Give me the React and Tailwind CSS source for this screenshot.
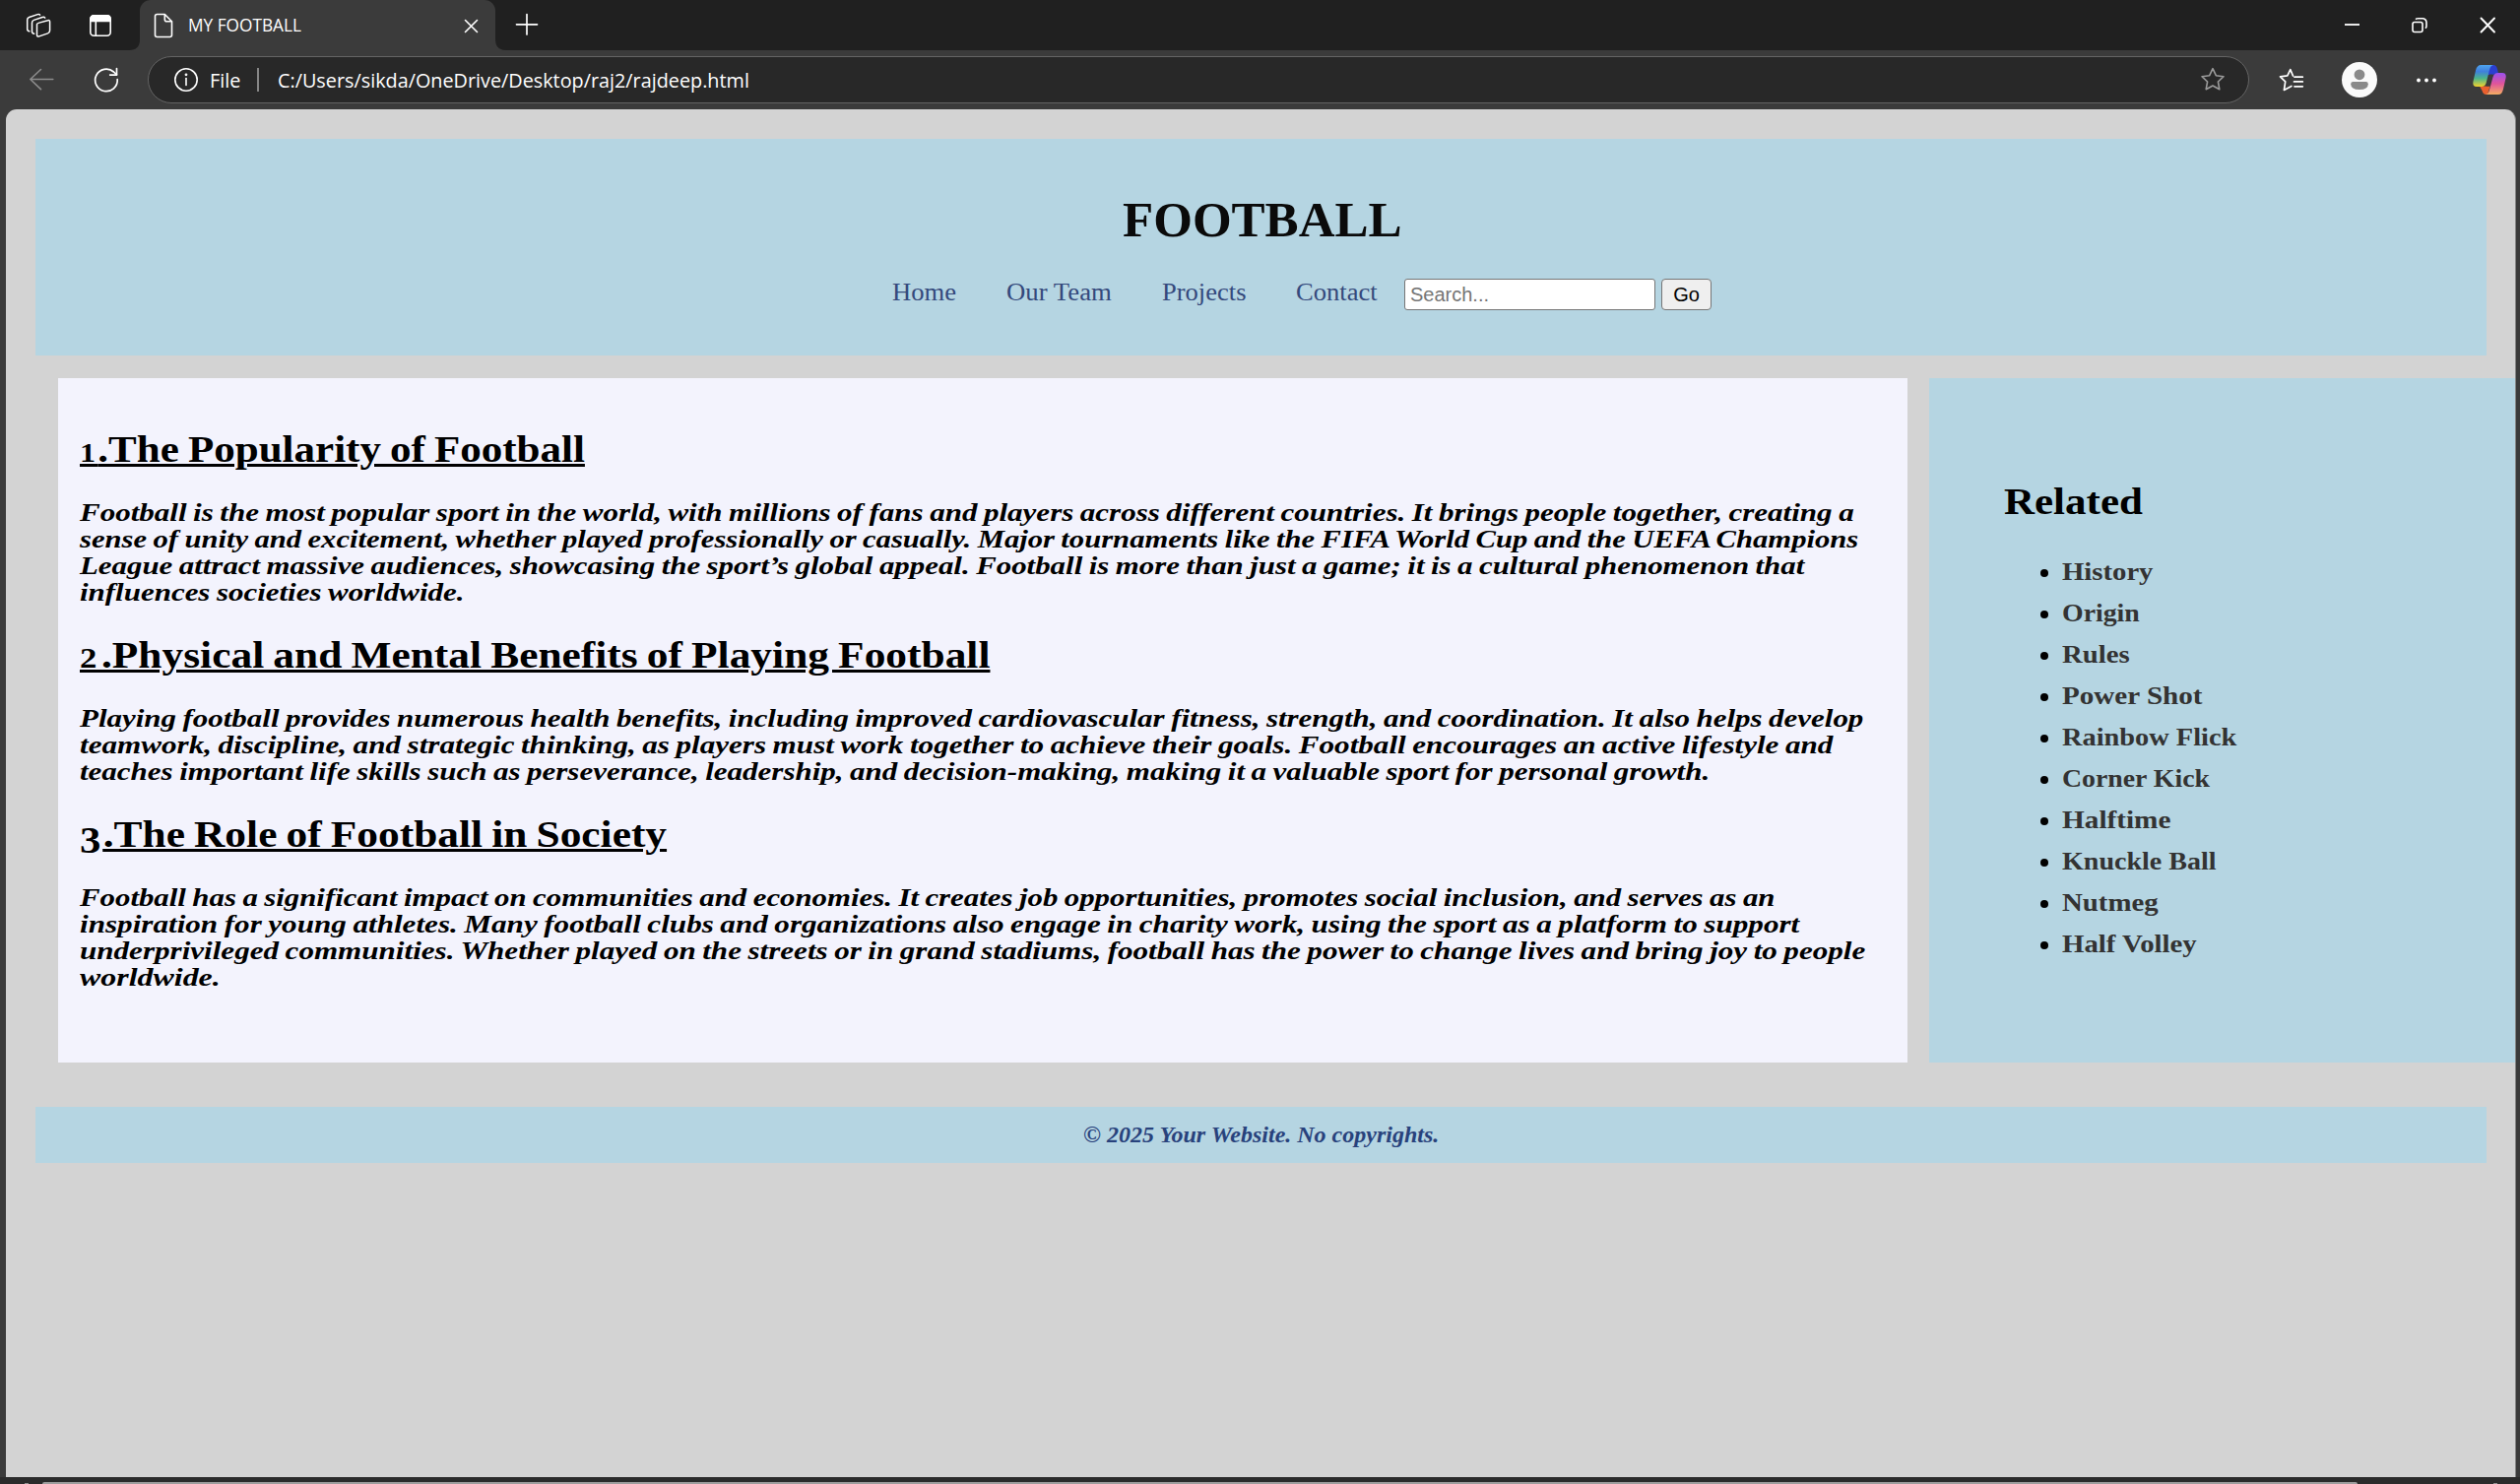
import { useLayoutEffect, useRef } from "react";

/* Text on one line, stretched horizontally to fill the width of its box. */
function Fit({ className = "", textClass = "", children }) {
  const box = useRef(null);
  const ink = useRef(null);
  useLayoutEffect(() => {
    const ratio = box.current.clientWidth / ink.current.offsetWidth;
    ink.current.style.transform = `scaleX(${ratio})`;
  }, []);
  return (
    <span ref={box} className={`block shrink-0 whitespace-nowrap ${className}`}>
      <span ref={ink} className={`inline-block origin-left align-top ${textClass}`}>
        {children}
      </span>
    </span>
  );
}

const line = { fill: "none", stroke: "currentColor", strokeLinecap: "round", strokeLinejoin: "round" };

function TabStrip() {
  return (
    <div className="flex h-[51px] items-start bg-[#202020] text-white">
      <svg className="mt-3 ml-[25px] h-7 w-7" viewBox="0 0 28 28" {...line} strokeWidth="1.5">
        <path d="M12.500 12.600v10.600q0 2.500 2.300 1.700l8.800-3q2-.8 2-2.800v-8.800q0-2.300-2-1.600l-8.800 2.400q-2.300.7-2.300 1.500z" />
        <path d="M9.700 22.300q-2.200-.2-2.200-2.200v-9.200q0-1.900 1.900-2.500l8.600-2.900q1.900-.6 2.700.6" />
        <path d="M4.800 19.800q-2.100-.3-2.100-2.300V8q0-1.900 1.900-2.500l8.600-2.900q1.700-.5 2.400.5" />
      </svg>
      <svg className="mt-3 ml-[35px] h-7 w-7" viewBox="0 0 28 28" {...line} strokeWidth="1.600">
        <rect x="3.800" y="3.800" width="20.400" height="20.400" rx="3.500" />
        <path d="M4 9.500V7a3.200 3.200 0 0 1 3.200-3.200h13.600A3.200 3.200 0 0 1 24 7v2.500z" fill="currentColor" />
        <path d="M9.300 10v14" />
      </svg>
      <div className="ml-[15px] flex h-[51px] items-end">
        <svg className="h-[11px] w-[11px]" viewBox="0 0 11 11">
          <path d="M11 0v11H0Q11 11 11 0z" fill="#3b3b3b" />
        </svg>
        <div className="flex h-[51px] w-[361px] items-start rounded-t-[11px] bg-[#3b3b3b]">
          <svg className="mt-[13px] ml-[14px] h-[26px] w-5" viewBox="0 0 20 26" {...line} strokeWidth="1.600">
            <path d="M3.500 1.500h7.800l7.200 7.200v13.800q0 2-2 2h-13q-2 0-2-2v-19q0-2 2-2z" />
            <path d="M11.300 1.800v5q0 2 2 2h5" />
          </svg>
          <Fit className="mt-[12px] ml-[15px] w-[115px] font-['Open_Sans','Noto_Sans',sans-serif] text-[18px] leading-[26px]">MY FOOTBALL</Fit>
          <svg className="mt-[19px] ml-[165px] h-[15px] w-[15px]" viewBox="0 0 15 15" {...line} strokeWidth="1.600">
            <path d="M1.500 1.500l12 12M13.500 1.500l-12 12" />
          </svg>
        </div>
        <svg className="h-[11px] w-[11px]" viewBox="0 0 11 11">
          <path d="M0 0v11h11Q0 11 0 0z" fill="#3b3b3b" />
        </svg>
      </div>
      <svg className="mt-[13px] ml-[9px] h-6 w-6" viewBox="0 0 24 24" {...line} strokeWidth="1.700">
        <path d="M12 1.500v20.500M1.500 11.800h21" />
      </svg>
      <div className="mt-[16px] mr-[23px] ml-auto flex gap-[50px]">
        <svg className="h-[19px] w-[19px]" viewBox="0 0 19 19" {...line} strokeWidth="1.800" strokeLinecap="butt">
          <path d="M2 9h15" />
        </svg>
        <svg className="h-[19px] w-[19px]" viewBox="0 0 19 19" {...line} strokeWidth="1.600">
          <rect x="2" y="6.500" width="10" height="10" rx="2" />
          <path d="M5.500 3.200Q6.200 2.700 7.500 2.700H12a4 4 0 0 1 4 4v3.500q0 1.300-.6 2" />
        </svg>
        <svg className="h-[19px] w-[19px]" viewBox="0 0 19 19" {...line} strokeWidth="1.900">
          <path d="M2.500 2.500l13.500 14M16 2.500L2.500 16.500" />
        </svg>
      </div>
    </div>
  );
}

const STAR = "M14 2.700l3.300 7 7.700 1-5.600 5.300 1.400 7.700-6.800-3.700-6.800 3.700 1.400-7.700L3 10.700l7.700-1z";

function Copilot() {
  return (
    <svg className="mr-[13px] ml-auto h-[32px] w-[36px]" viewBox="0 0 36 32">
      <defs>
        <linearGradient id="cpLeft" x1="0" y1="0" x2="0" y2="1">
          <stop offset="0" stopColor="#4fa5f0" />
          <stop offset=".3" stopColor="#3f7fdc" />
          <stop offset=".62" stopColor="#4cb58a" />
          <stop offset="1" stopColor="#f3d22c" />
        </linearGradient>
        <linearGradient id="cpRight" x1="0" y1="0" x2="0" y2="1">
          <stop offset="0" stopColor="#9a50f0" />
          <stop offset=".5" stopColor="#e0559a" />
          <stop offset="1" stopColor="#f4ad62" />
        </linearGradient>
      </defs>
      <path d="M17 1h5q3 0 4 4l1 4.500q-4 0-5.500 1.500H16z" fill="#2b3fd0" />
      <path d="M8 22.500h10.500L16 31h-1.500q-3 0-4-4z" fill="#e9602f" />
      <path d="M9.500 1H22q-3 .5-4 5l-3.300 13Q13.700 23 9.700 23H5q-4.500 0-3.600-5L4 6.500Q5.200 1 9.500 1z" fill="url(#cpLeft)" />
      <path d="M27 31H14q3-.5 4-5l3.300-12Q22.500 9 26.500 9H31q4.500 0 3.600 5L32 25.500Q30.800 31 27 31z" fill="url(#cpRight)" />
      <path d="M18 10.500h3.500L18 22.500h-3.300z" fill="#3b3b3b" />
    </svg>
  );
}

function Toolbar() {
  return (
    <div className="flex h-[60px] items-center bg-[#3b3b3b] text-white">
      <svg className="ml-[28px] h-7 w-7 text-[#8c8c8c]" viewBox="0 0 28 28" {...line} strokeWidth="1.600">
        <path d="M13.500 3.500L2.800 13.500l10.700 10.200M2.800 13.500h23" />
      </svg>
      <svg className="ml-[38px] h-7 w-7" viewBox="0 0 28 28" {...line} strokeWidth="1.700">
        <path d="M25.200 13.500A11.300 11.300 0 1 1 21.500 6l3 2.900" />
        <path d="M24.500 2.600v6.500h-6.800" />
      </svg>
      <div className="ml-[28px] flex h-[48px] w-[2134px] items-center rounded-full border-[1.500px] border-[#646464] bg-[#282828]">
        <svg className="ml-[24px] h-7 w-7" viewBox="0 0 28 28" {...line} strokeWidth="1.600">
          <circle cx="14" cy="14" r="11.200" />
          <path d="M14 12.500v7" />
          <circle cx="14" cy="8.800" r=".6" fill="currentColor" />
        </svg>
        <Fit className="ml-[10px] w-[31px] font-['Open_Sans','Noto_Sans',sans-serif] text-[20.500px] leading-7">File</Fit>
        <div className="ml-[17px] h-6 w-[1.500px] bg-[#858585]" />
        <Fit className="ml-[19px] w-[479px] font-['Open_Sans','Noto_Sans',sans-serif] text-[20.500px] leading-7">
          C:/Users/sikda/OneDrive/Desktop/raj2/rajdeep.html
        </Fit>
        <svg className="mr-[22px] ml-auto h-7 w-7 text-[#9a9a9a]" viewBox="0 0 28 28" {...line} strokeWidth="1.600">
          <path d={STAR} />
        </svg>
      </div>
      <svg className="ml-[28px] h-7 w-7" viewBox="0 0 28 28" {...line} strokeWidth="1.700">
        <path d="M16.500 10L13.800 3.600l-3 6.200-7.300 1 5.200 5.100-1.300 8.600 7.500-4" />
        <path d="M18 11.200h8.300M17.500 15.900h8.800M18 20.800h8.300" />
      </svg>
      <svg className="ml-[38px] h-9 w-9" viewBox="0 0 36 36">
        <circle cx="18" cy="18" r="18" fill="#fafafa" />
        <circle cx="18" cy="12.800" r="5.400" fill="#8a8a8a" />
        <path d="M11.500 20h13q2.300 0 2.300 2.200 0 5.800-8.800 5.800t-8.800-5.800q0-2.200 2.300-2.200z" fill="#8a8a8a" />
      </svg>
      <svg className="ml-[38px] h-6 w-6" viewBox="0 0 24 24" fill="currentColor">
        <circle cx="4" cy="12.500" r="1.900" />
        <circle cx="12" cy="12.500" r="1.900" />
        <circle cx="20" cy="12.500" r="1.900" />
      </svg>
      <Copilot />
    </div>
  );
}

function Masthead() {
  return (
    <header className="mr-[29px] ml-[30px] flex h-[220px] flex-col bg-[#b5d5e2]">
      <h1 className="mt-[54px] ml-[1104px] font-bold text-[#0a0a0a]">
        <Fit className="w-[284px] text-[50.500px] leading-[56px]">FOOTBALL</Fit>
      </h1>
      <nav className="mt-[28px] ml-[870px] flex items-center text-[25px] leading-[32px] text-[#34497c]">
        <Fit className="w-[65px]">Home</Fit>
        <Fit className="ml-[51px] w-[107px]">Our Team</Fit>
        <Fit className="ml-[51px] w-[86px]">Projects</Fit>
        <Fit className="ml-[50px] w-[83px]">Contact</Fit>
        <div className="mt-[4px] ml-[27px] flex gap-[6px] font-['Liberation_Sans',Arial,sans-serif] text-[20px]">
          <input
            placeholder="Search..."
            className="h-[32px] w-[255px] rounded-[3px] border-[1.500px] border-[#767676] bg-white px-[5px] leading-[28px] placeholder:text-[#757575]"
          />
          <button className="h-[32px] w-[51px] rounded-[4px] border-[1.500px] border-[#767676] bg-[#efefef] leading-[28px] text-black">Go</button>
        </div>
      </nav>
    </header>
  );
}

const SECTIONS = [
  {
    digit: "1",
    digitClass: "text-[28px] tracking-[2px]",
    title: ".The Popularity of Football",
    width: "w-[513px]",
    lines: [
      ["w-[1802px]", "Football is the most popular sport in the world, with millions of fans and players across different countries. It brings people together, creating a"],
      ["w-[1806px]", "sense of unity and excitement, whether played professionally or casually. Major tournaments like the FIFA World Cup and the UEFA Champions"],
      ["w-[1751px]", "League attract massive audiences, showcasing the sport’s global appeal. Football is more than just a game; it is a cultural phenomenon that"],
      ["w-[390px]", "influences societies worldwide."],
    ],
  },
  {
    digit: "2",
    digitClass: "text-[30px] tracking-[4px]",
    title: ".Physical and Mental Benefits of Playing Football",
    width: "w-[925px]",
    lines: [
      ["w-[1811px]", "Playing football provides numerous health benefits, including improved cardiovascular fitness, strength, and coordination. It also helps develop"],
      ["w-[1780px]", "teamwork, discipline, and strategic thinking, as players must work together to achieve their goals. Football encourages an active lifestyle and"],
      ["w-[1655px]", "teaches important life skills such as perseverance, leadership, and decision-making, making it a valuable sport for personal growth."],
    ],
  },
  {
    digit: "3",
    digitClass: "align-[-6px] text-[37px] tracking-[2px]",
    title: ".The Role of Football in Society",
    width: "w-[596px]",
    lines: [
      ["w-[1721px]", "Football has a significant impact on communities and economies. It creates job opportunities, promotes social inclusion, and serves as an"],
      ["w-[1746px]", "inspiration for young athletes. Many football clubs and organizations also engage in charity work, using the sport as a platform to support"],
      ["w-[1813px]", "underprivileged communities. Whether played on the streets or in grand stadiums, football has the power to change lives and bring joy to people"],
      ["w-[143px]", "worldwide."],
    ],
  },
];

function Article() {
  return (
    <main className="ml-[53px] flex h-[695px] w-[1878px] flex-col gap-[29px] bg-[#f3f3fd] pt-[52px] pl-[22px] font-bold text-black">
      {SECTIONS.map((s) => (
        <section key={s.digit}>
          <h2>
            <Fit
              className={`h-[42px] text-[37.500px] leading-[42px] ${s.width}`}
              textClass="underline decoration-[3px] underline-offset-[2px] [word-spacing:-0.04em]"
            >
              <span className={`leading-none ${s.digitClass}`}>{s.digit}</span>
              {s.title}
            </Fit>
          </h2>
          <p className="mt-[29px] mb-px text-[25px] leading-[27px] italic">
            {s.lines.map(([width, text]) => (
              <Fit key={text} className={`h-[27px] ${width}`} textClass="[word-spacing:-0.04em]">{text}</Fit>
            ))}
          </p>
        </section>
      ))}
    </main>
  );
}

const RELATED = [
  ["w-[93px]", "History"],
  ["w-[79px]", "Origin"],
  ["w-[69px]", "Rules"],
  ["w-[142px]", "Power Shot"],
  ["w-[177px]", "Rainbow Flick"],
  ["w-[150px]", "Corner Kick"],
  ["w-[110px]", "Halftime"],
  ["w-[157px]", "Knuckle Ball"],
  ["w-[98px]", "Nutmeg"],
  ["w-[137px]", "Half Volley"],
];

function Sidebar() {
  return (
    <aside className="h-[695px] flex-1 bg-[#b5d5e2] pt-[105px] pl-[76px] font-bold">
      <h2>
        <Fit className="w-[141px] text-[37.500px] leading-[42px] text-black">Related</Fit>
      </h2>
      <ul className="mt-[29px] pl-[37px]">
        {RELATED.map(([width, text]) => (
          <li key={text} className="flex h-[42px] items-center">
            <span className="mt-[2px] h-2 w-2 rounded-full bg-black" />
            <Fit className={`ml-[14px] text-[25px] leading-[42px] text-[#333333] ${width}`}>{text}</Fit>
          </li>
        ))}
      </ul>
    </aside>
  );
}

function BottomEdge() {
  return (
    <div className="flex h-[7px] items-end bg-[#2b2b2b]">
      <div className="ml-[25px] h-[1.500px] w-1 bg-[#8f8f8f]" />
      <div className="ml-[14px] h-[2px] w-[2351px] rounded-t-[2px] bg-[#9d9d9d]" />
      <div className="ml-[138px] h-[1.500px] w-1 bg-[#8f8f8f]" />
    </div>
  );
}

export default function App() {
  return (
    <div className="flex h-screen w-full flex-col overflow-hidden bg-[#3b3b3b] font-['Liberation_Serif',serif]">
      <TabStrip />
      <Toolbar />
      <div className="ml-[6px] flex h-[1389px] w-[2549px] flex-col overflow-hidden rounded-t-[11px] border-r border-[#858585] bg-[#d3d3d3] pt-[30px]">
        <Masthead />
        <div className="mt-[23px] flex gap-[22px]">
          <Article />
          <Sidebar />
        </div>
        <footer className="mt-[45px] mr-[29px] ml-[30px] h-[57px] bg-[#b5d5e2] pt-[13px] text-[#28427c]">
          <Fit className="ml-[1064px] w-[361px] text-[24px] leading-[30px] font-bold italic">© 2025 Your Website. No copyrights.</Fit>
        </footer>
      </div>
      <BottomEdge />
    </div>
  );
}
